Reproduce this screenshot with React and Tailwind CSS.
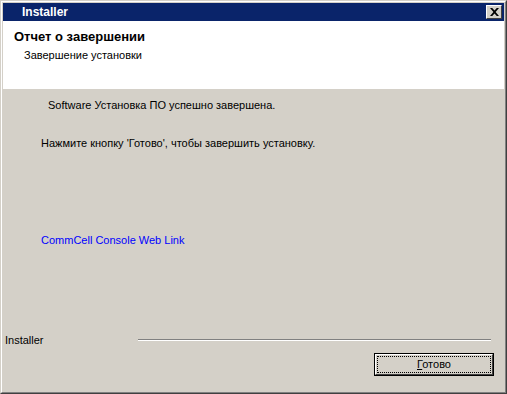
import React from "react";

const App = () => {
  return (
    <div
      className="w-[507px] h-[394px] bg-[#d4d0c8] border border-t-[#d4d0c8] border-l-[#d4d0c8] border-b-[#404040] border-r-[#404040] text-[11px] text-black"
      style={{ fontFamily: '"Liberation Sans", Arial, sans-serif' }}
    >
      <div className="h-full flex flex-col border border-t-white border-l-white border-b-[#808080] border-r-[#808080] p-px">
        <div className="h-[18px] bg-[#0a246a] flex items-center justify-between pl-[19px] pr-[2px]">
          <span className="text-white font-bold text-[12px]">Installer</span>
          <button className="w-4 h-[14px] bg-[#d4d0c8] border border-t-white border-l-white border-b-[#404040] border-r-[#404040] flex items-center justify-center">
            <svg width="9" height="8" viewBox="0 0 9 8">
              <path d="M0 0h2.2l2.3 2.6L6.8 0H9L5.6 4 9 8H6.8L4.5 5.4 2.2 8H0l3.4-4z" fill="#000" />
            </svg>
          </button>
        </div>
        <div className="h-[68px] bg-white pl-[11px] pt-[8px]">
          <div className="font-bold text-[13px] leading-[15px]">Отчет о завершении</div>
          <div className="pl-[10px] pt-[3px]">Завершение установки</div>
        </div>
        <div className="flex-1 flex flex-col">
          <div className="pl-[45px] pt-[8px]">Software Установка ПО успешно завершена.</div>
          <div className="pl-[38px] pt-[21px]">
            Нажмите кнопку 'Готово', чтобы завершить установку.
          </div>
          <div className="pl-[38px] pt-[81px] text-[#0000ff]">CommCell Console Web Link</div>
          <div className="flex items-center pl-[2px] pr-[13px] mt-[83px]">
            <span>Installer</span>
            <div className="flex-1 ml-[94px] border-t border-t-[#808080] border-b border-b-white" />
          </div>
          <div className="flex justify-end pr-[10px] mt-[5px]">
            <button className="w-[120px] h-[23px] border border-black bg-[#d4d0c8] p-0">
              <div className="h-full border border-t-white border-l-white border-b-[#404040] border-r-[#404040] p-px">
                <div className="h-full border border-dotted border-black flex items-center justify-center">
                  <span>
                    <span className="underline">Г</span>отово
                  </span>
                </div>
              </div>
            </button>
          </div>
        </div>
      </div>
    </div>
  );
};

export default App;
